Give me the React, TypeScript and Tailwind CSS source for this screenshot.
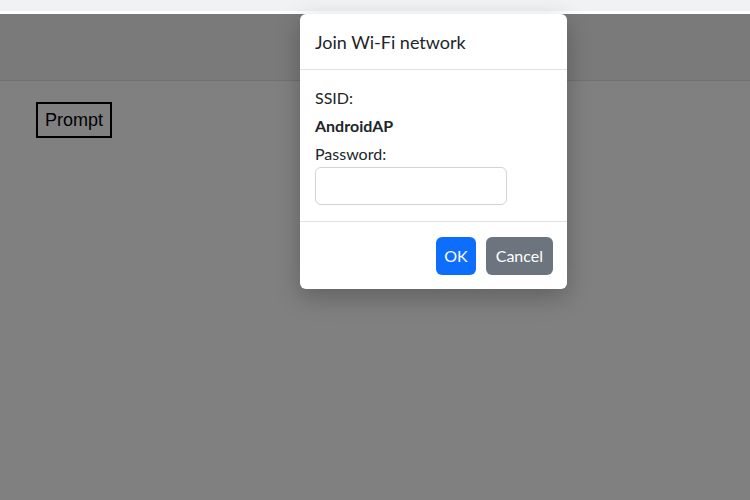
const App = () => {
  return (
    <div className="relative w-[750px] h-[500px] overflow-hidden bg-[#808080]">
      <div className="h-[11px] bg-[#f1f2f4]" />
      <div className="h-[3px] bg-white" />
      <div className="h-[67px] bg-[#7a7a7a] border-b border-[#717171]" />
      <div className="pl-[36px] pt-[21px]">
        <button className="border-2 border-black px-[7px] h-[36px] text-[18px] text-black font-['Liberation_Sans',Arial,sans-serif]">
          Prompt
        </button>
      </div>

      <div className="absolute left-[300px] top-[14px] w-[267px] bg-white rounded-[6px] shadow-[0_8px_24px_rgba(0,0,0,0.25)] font-['Lato','Open_Sans',sans-serif] text-[#212529]">
        <div className="h-[56px] px-[15px] flex items-center border-b border-[#dee2e6]">
          <h5 className="text-[18px] leading-none">Join Wi-Fi network</h5>
        </div>
        <div className="px-[15px] pt-[16px] pb-[16px] text-[16px]">
          <div className="leading-[24px]">SSID:</div>
          <div className="leading-[24px] mt-[4px] font-bold">AndroidAP</div>
          <div className="leading-[24px] mt-[4px]">Password:</div>
          <input
            type="password"
            className="mt-[1px] w-[192px] h-[38px] border border-[#ced4da] rounded-[6px] outline-none px-3"
          />
        </div>
        <div className="border-t border-[#dee2e6] h-[68px] flex items-center justify-end gap-[10px] px-[14px]">
          <button className="h-[38px] px-[8px] rounded-[6px] bg-[#0d6efd] text-white text-[16px]">
            OK
          </button>
          <button className="h-[38px] px-[10px] rounded-[6px] bg-[#6c757d] text-white text-[16px]">
            Cancel
          </button>
        </div>
      </div>
    </div>
  );
};

export default App;
